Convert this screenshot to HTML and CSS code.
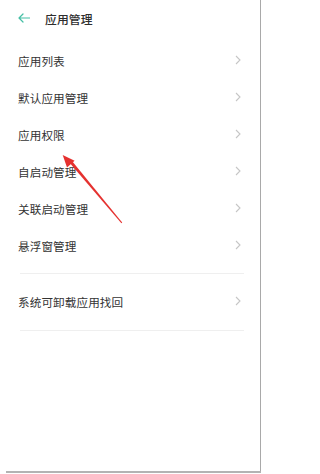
FILE: index.html
```html
<!DOCTYPE html>
<html lang="zh-CN">
<head>
<meta charset="utf-8">
<title>应用管理</title>
<link rel="stylesheet" href="styles.css">
</head>
<body>
<div class="screen">
  <header class="header">
    <svg class="back" width="12" height="10" viewBox="0 0 12 10"><path d="M11.5 5H1M5 1L1 5L5 9" fill="none" stroke="#45bfa5" stroke-width="1.2" stroke-linecap="round" stroke-linejoin="round"/></svg>
    <span class="title">应用管理</span>
  </header>
  <ul class="list">
    <li class="row"><span>应用列表</span><svg class="chev" width="6" height="10" viewBox="0 0 6 10"><polyline points="1,1 5,5 1,9" fill="none" stroke="#c6c6c6" stroke-width="1.1"/></svg></li>
    <li class="row"><span>默认应用管理</span><svg class="chev" width="6" height="10" viewBox="0 0 6 10"><polyline points="1,1 5,5 1,9" fill="none" stroke="#c6c6c6" stroke-width="1.1"/></svg></li>
    <li class="row"><span>应用权限</span><svg class="chev" width="6" height="10" viewBox="0 0 6 10"><polyline points="1,1 5,5 1,9" fill="none" stroke="#c6c6c6" stroke-width="1.1"/></svg></li>
    <li class="row"><span>自启动管理</span><svg class="chev" width="6" height="10" viewBox="0 0 6 10"><polyline points="1,1 5,5 1,9" fill="none" stroke="#c6c6c6" stroke-width="1.1"/></svg></li>
    <li class="row"><span>关联启动管理</span><svg class="chev" width="6" height="10" viewBox="0 0 6 10"><polyline points="1,1 5,5 1,9" fill="none" stroke="#c6c6c6" stroke-width="1.1"/></svg></li>
    <li class="row"><span>悬浮窗管理</span><svg class="chev" width="6" height="10" viewBox="0 0 6 10"><polyline points="1,1 5,5 1,9" fill="none" stroke="#c6c6c6" stroke-width="1.1"/></svg></li>
  </ul>
  <div class="divider"></div>
  <div class="row row-tall"><span>系统可卸载应用找回</span><svg class="chev" width="6" height="10" viewBox="0 0 6 10"><polyline points="1,1 5,5 1,9" fill="none" stroke="#c6c6c6" stroke-width="1.1"/></svg></div>
  <div class="divider"></div>
  <svg class="annot" width="264" height="474" viewBox="0 0 264 474">
    <polygon points="70.2,163.5 72.4,161.6 122.2,222.6 121.4,223.3" fill="#e5312f"/>
    <polygon points="62.7,155 67,167.5 74.6,160.8" fill="#e5312f"/>
  </svg>
</div>
<div class="bottom-bar"></div>
</body>
</html>
```
FILE: styles.css
```css
html, body {
  margin: 0;
  padding: 0;
  background: #ffffff;
}
body {
  width: 264px;
  height: 474px;
  overflow: hidden;
  font-family: "Noto Sans CJK SC", "Noto Sans", sans-serif;
  color: #333;
}
.screen {
  position: relative;
  width: 261px;
  height: 471px;
  border-right: 1px solid #a9a9a9;
  box-sizing: border-box;
}
.header {
  height: 42px;
  display: flex;
  align-items: center;
  padding-left: 18px;
  padding-bottom: 6px;
  box-sizing: border-box;
}
.back {
  display: block;
  margin-right: 15px;
}
.title {
  font-size: 11.8px;
  font-weight: 500;
  color: #2e2e2e;
  letter-spacing: 0.1px;
}
.list {
  list-style: none;
  margin: 0;
  padding: 0;
}
.row {
  height: 37px;
  display: flex;
  align-items: center;
  justify-content: space-between;
  padding: 0 18px 0 18px;
  font-size: 11.6px;
  letter-spacing: 0.1px;
  color: #333;
}
.row .chev {
  margin-right: 1px;
  margin-top: -2px;
}
.row-tall {
  height: 56px;
}
.divider {
  height: 1px;
  background: #efefef;
  margin: 0 16px 0 20px;
}
.list + .divider {
  margin-top: 9px;
}
.annot {
  position: absolute;
  left: 0;
  top: 0;
  pointer-events: none;
}
.bottom-bar {
  height: 2px;
  margin-left: 6px;
  width: 255px;
  background: #b3b3b3;
}
```
